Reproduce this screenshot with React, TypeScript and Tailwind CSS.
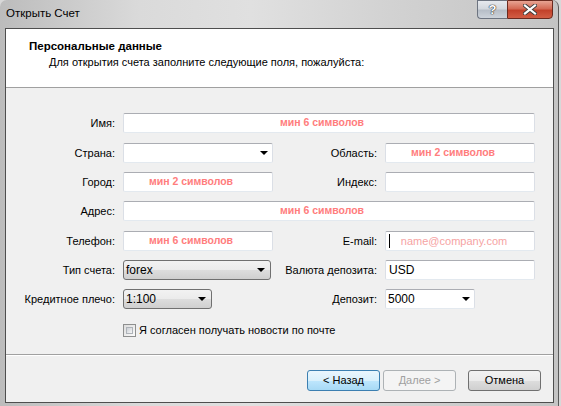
import React from "react";

type Hint = { text: string; kind: "req" | "mail" };

function Arrow() {
  return (
    <svg width="8" height="4" viewBox="0 0 8 4" className="shrink-0">
      <path d="M0 0H8L4 4Z" fill="#000" />
    </svg>
  );
}

function TextBox({ hint, value }: { hint?: Hint; value?: string }) {
  return (
    <div className="h-[20px] w-full bg-white border border-[#dbdfe6] border-t-[#abadb3] border-b-[#e3e9ef] rounded-[2px] flex items-center relative">
      {value && <span className="pl-[3px] text-[12px]">{value}</span>}
      {hint && hint.kind === "req" && (
        <span className="w-full text-center pr-[14px] font-bold text-[10.5px] text-[#ff7d7d]">{hint.text}</span>
      )}
      {hint && hint.kind === "mail" && (
        <>
          <span className="absolute left-[3px] top-[2px] w-px h-[14px] bg-black" />
          <span className="w-full text-center pr-[12px] text-[#f6a3a3]">{hint.text}</span>
        </>
      )}
    </div>
  );
}

function ComboBox({ value, width }: { value?: string; width: string }) {
  return (
    <div
      className={`h-[20px] ${width} bg-white border border-[#dbdfe6] border-t-[#abadb3] border-b-[#e3e9ef] rounded-[2px] flex items-center justify-between pl-[2px] pr-[4px] text-[12px]`}
    >
      <span>{value}</span>
      <Arrow />
    </div>
  );
}

function DropList({ value, width }: { value: string; width: string }) {
  return (
    <div
      className={`h-[20px] ${width} border border-[#707070] rounded-[3px] bg-[linear-gradient(to_bottom,#f2f2f2_0%,#ebebeb_50%,#dddddd_51%,#cfcfcf_100%)] flex items-center justify-between pl-[2px] pr-[5px] text-[12px]`}
    >
      <span>{value}</span>
      <Arrow />
    </div>
  );
}

function Label({ children }: { children: React.ReactNode }) {
  return <div className="h-[20px] flex items-center justify-end whitespace-nowrap">{children}</div>;
}

function WinButton({ label, variant }: { label: string; variant: "default" | "disabled" | "normal" }) {
  const look = {
    default:
      "border-[#3c7fb1] bg-[linear-gradient(to_bottom,#eaf6fd_0%,#d9f0fc_50%,#bee6fd_51%,#a7d9f5_100%)] text-black",
    disabled: "border-[#adb2b5] bg-[#f4f4f4] text-[#a0a0a0]",
    normal:
      "border-[#707070] bg-[linear-gradient(to_bottom,#f2f2f2_0%,#ebebeb_50%,#dddddd_51%,#cfcfcf_100%)] text-black",
  }[variant];
  return (
    <div className={`w-[73px] h-[21px] border rounded-[3px] flex items-center justify-center ${look}`}>
      {label}
    </div>
  );
}

export default function App() {
  return (
    <div className="w-[561px] h-[406px] bg-[#d8d8d8] overflow-hidden font-['Liberation_Sans',Arial,sans-serif] text-[11px] text-black">
      <div className="w-[559px] h-[406px] rounded-t-[7px] border-r border-[#5a5a5a] bg-[linear-gradient(to_right,#bcbcbc_0%,#dadada_25%,#e0e0e0_45%,#d2d2d2_70%,#c4c4c4_100%)] flex flex-col pl-[5px] pr-[4px] pb-[3px]">
        {/* title bar */}
        <div className="h-[28px] relative flex items-center">
          <span className="pl-[1px] text-[11.5px] leading-none">Открыть Счет</span>
          <div className="absolute top-0 right-[1px] flex">
            <div className="w-[30px] h-[19px] border border-[#6d7480] border-r-0 rounded-bl-[4px] bg-[linear-gradient(to_bottom,#e6e9ee_0%,#d3d8de_45%,#b7bec7_55%,#cdd3da_100%)] flex items-center justify-center">
              <span className="font-bold text-[13px] text-white [text-shadow:0_0_1px_#333,0_0_1px_#333,0_0_1px_#333]">
                ?
              </span>
            </div>
            <div className="w-[46px] h-[19px] border border-[#6b2a1f] rounded-br-[4px] bg-[linear-gradient(to_bottom,#e8a493_0%,#d46a55_45%,#c2412a_55%,#d25d44_100%)] flex items-center justify-center">
              <svg width="14" height="11" viewBox="0 0 14 11">
                <path d="M2 1.5L12 9.5M12 1.5L2 9.5" stroke="#3d3d3d" strokeWidth="4" strokeLinecap="square" />
                <path d="M2 1.5L12 9.5M12 1.5L2 9.5" stroke="#ffffff" strokeWidth="2.2" strokeLinecap="square" />
              </svg>
            </div>
          </div>
        </div>

        {/* client area */}
        <div className="flex-1 border border-[#4e4e4e] bg-[#f0f0f0] flex flex-col">
          <div className="h-[59px] bg-white border-b border-[#a0a0a0] pt-[10px] leading-[14px]">
            <div className="pl-[23px] font-bold text-[11.5px]">Персональные данные</div>
            <div className="pl-[43px] mt-[2px]">Для открытия счета заполните следующие поля, пожалуйста:</div>
          </div>

          <div className="flex-1 pt-[25px] border-b border-[#a0a0a0]">
            <div className="grid grid-cols-[109px_150px_96px_150px] gap-x-[8px]">
              <Label>Имя:</Label>
              <div className="col-span-3">
                <TextBox hint={{ text: "мин 6 символов", kind: "req" }} />
              </div>
            </div>
            <div className="grid grid-cols-[109px_150px_96px_150px] gap-x-[8px] mt-[10px]">
              <Label>Страна:</Label>
              <ComboBox width="w-full" />
              <Label>Область:</Label>
              <TextBox hint={{ text: "мин 2 символов", kind: "req" }} />
            </div>
            <div className="grid grid-cols-[109px_150px_96px_150px] gap-x-[8px] mt-[9px]">
              <Label>Город:</Label>
              <TextBox hint={{ text: "мин 2 символов", kind: "req" }} />
              <Label>Индекс:</Label>
              <TextBox />
            </div>
            <div className="grid grid-cols-[109px_150px_96px_150px] gap-x-[8px] mt-[9px]">
              <Label>Адрес:</Label>
              <div className="col-span-3">
                <TextBox hint={{ text: "мин 6 символов", kind: "req" }} />
              </div>
            </div>
            <div className="grid grid-cols-[109px_150px_96px_150px] gap-x-[8px] mt-[10px]">
              <Label>Телефон:</Label>
              <TextBox hint={{ text: "мин 6 символов", kind: "req" }} />
              <Label>E-mail:</Label>
              <TextBox hint={{ text: "name@company.com", kind: "mail" }} />
            </div>
            <div className="grid grid-cols-[109px_150px_96px_150px] gap-x-[8px] mt-[9px]">
              <Label>Тип счета:</Label>
              <DropList value="forex" width="w-[148px]" />
              <Label>Валюта депозита:</Label>
              <TextBox value="USD" />
            </div>
            <div className="grid grid-cols-[109px_150px_96px_150px] gap-x-[8px] mt-[9px]">
              <Label>Кредитное плечо:</Label>
              <DropList value="1:100" width="w-[89px]" />
              <Label>Депозит:</Label>
              <ComboBox value="5000" width="w-[90px]" />
            </div>
            <div className="flex items-center mt-[13px] pl-[117px] gap-[3px]">
              <div className="w-[13px] h-[13px] border border-[#8e8f8f] bg-[linear-gradient(135deg,#dcdcdc,#fbfbfb)] p-[2px]">
                <div className="w-full h-full border border-[#aeb3b9] bg-[linear-gradient(135deg,#cbcfd5,#f6f6f6)]" />
              </div>
              <span>Я согласен получать новости по почте</span>
            </div>
          </div>

          <div className="h-[47px] border-t border-white flex justify-end items-start pt-[14px] pr-[12px]">
            <WinButton label="< Назад" variant="default" />
            <div className="ml-[3px]">
              <WinButton label="Далее >" variant="disabled" />
            </div>
            <div className="ml-[12px]">
              <WinButton label="Отмена" variant="normal" />
            </div>
          </div>
        </div>
      </div>
    </div>
  );
}
